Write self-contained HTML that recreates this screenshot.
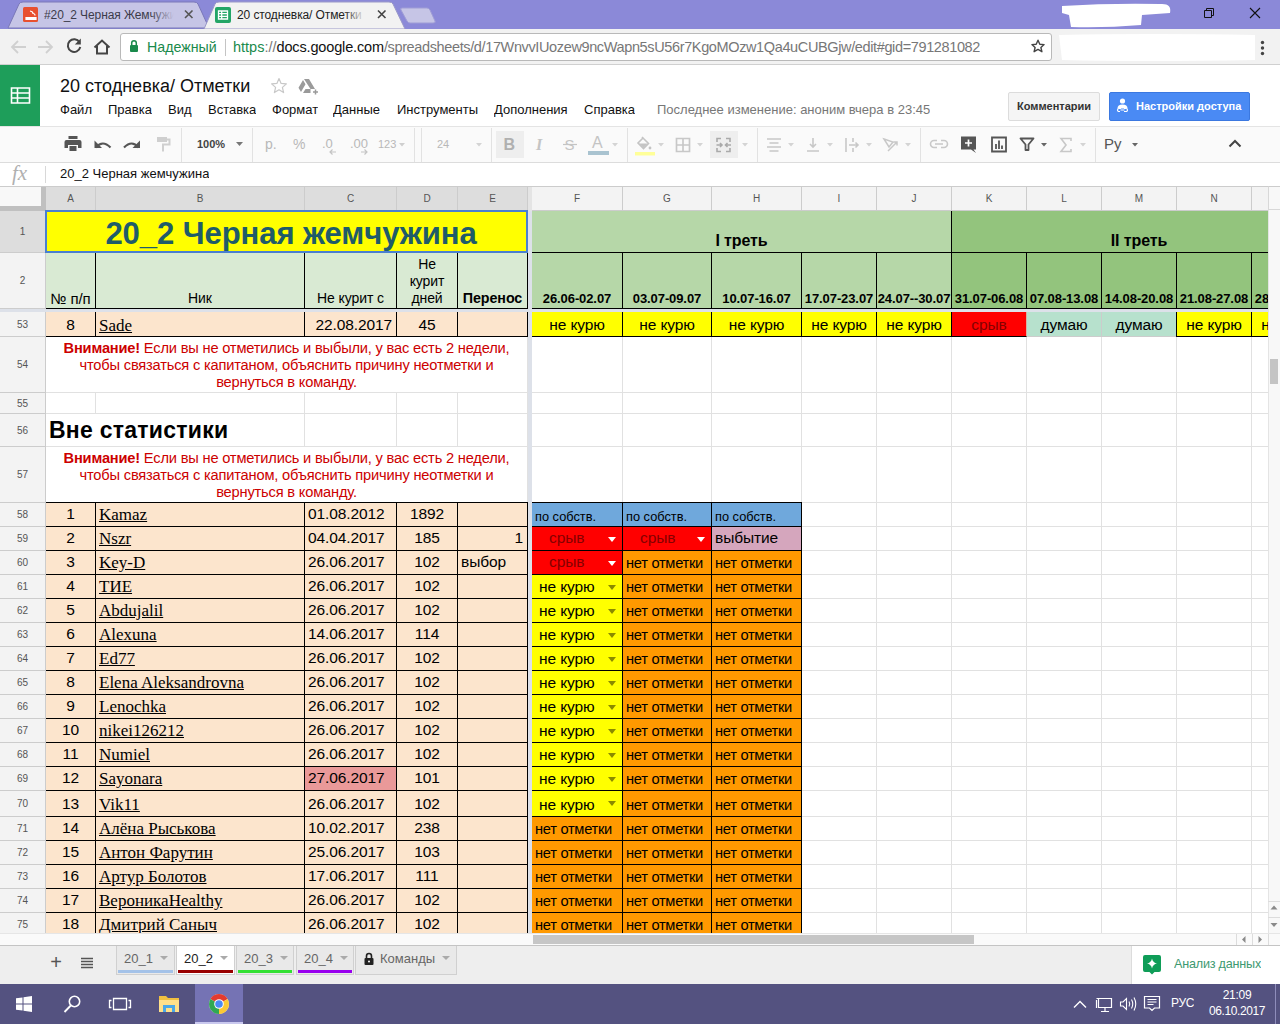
<!DOCTYPE html>
<html lang="ru"><head><meta charset="utf-8">
<title>20 стодневка/ Отметки</title>
<style>
*{box-sizing:border-box;margin:0;padding:0}
html,body{width:1280px;height:1024px;overflow:hidden;background:#fff;font-family:"Liberation Sans",sans-serif;color:#000}
.b{position:absolute;overflow:hidden;white-space:nowrap}
#grid{position:absolute;left:0;top:0;width:1268px;height:933px;overflow:hidden;background:#fff}
.c{border-right:1px solid #e1e1e1;border-bottom:1px solid #e1e1e1;font-size:15.5px;letter-spacing:-0.1px;line-height:22px}
.k{border-right:1px solid #000;border-bottom:1px solid #000}
.rh{background:#f3f3f3;border-right:1px solid #ccc;border-bottom:1px solid #ccc;color:#444;font-size:10px;text-align:center}
.ch{background:#f3f3f3;border-right:1px solid #ccc;border-bottom:1px solid #ccc;color:#444;font-size:10px;text-align:center;line-height:23px}
.ctr{text-align:center}
.nick{font-family:"Liberation Serif",serif;text-decoration:underline;font-size:17px;letter-spacing:0;padding-left:3px;line-height:24px}
.peach{background:#fce5cd}
.yel{background:#ffff00}
.org{background:#ff9900}
.red{background:#ff0000}
.warn{color:#cc0000;font-size:14.67px;letter-spacing:-0.19px;line-height:17px;white-space:normal;text-align:center}
.mn{height:18px;font-size:13px;line-height:18px;color:#111}
.tt{font-size:13px;fill:#b8b8b8;font-family:"Liberation Sans",sans-serif}
.st{top:946px;height:29px;background:#e9e9e9;border:1px solid #d0d0d0;border-top:none;font-size:13px;line-height:25px;color:#666;padding-left:7px}
.st i{position:absolute;left:43px;top:10px;width:0;height:0;border-left:4px solid transparent;border-right:4px solid transparent;border-top:4px solid #aaa}
.st u{position:absolute;left:1px;right:1px;bottom:1px;height:3px}
.rh{color:#555}.ch{color:#555}
</style></head><body>
<div id="grid">
<div class="b " style="left:0px;top:186px;width:1268px;height:25px;background:#f3f3f3"></div>
<div class="b " style="left:0px;top:186px;width:46px;height:25px;background:#f8f8f8;border-right:5px solid #c0c0c0;border-bottom:5px solid #c0c0c0"></div>
<div class="b" style="left:0px;top:186px;width:1268px;height:1px;background:#ccc"></div>
<div class="b ch" style="left:46px;top:187px;width:50px;height:24px;background:#dddddd;">A</div>
<div class="b ch" style="left:96px;top:187px;width:209px;height:24px;background:#dddddd;">B</div>
<div class="b ch" style="left:305px;top:187px;width:92px;height:24px;background:#dddddd;">C</div>
<div class="b ch" style="left:397px;top:187px;width:61px;height:24px;background:#dddddd;">D</div>
<div class="b ch" style="left:458px;top:187px;width:70px;height:24px;background:#dddddd;">E</div>
<div class="b ch" style="left:532px;top:187px;width:91px;height:24px;">F</div>
<div class="b ch" style="left:623px;top:187px;width:89px;height:24px;">G</div>
<div class="b ch" style="left:712px;top:187px;width:90px;height:24px;">H</div>
<div class="b ch" style="left:802px;top:187px;width:75px;height:24px;">I</div>
<div class="b ch" style="left:877px;top:187px;width:75px;height:24px;">J</div>
<div class="b ch" style="left:952px;top:187px;width:75px;height:24px;">K</div>
<div class="b ch" style="left:1027px;top:187px;width:75px;height:24px;">L</div>
<div class="b ch" style="left:1102px;top:187px;width:75px;height:24px;">M</div>
<div class="b ch" style="left:1177px;top:187px;width:75px;height:24px;">N</div>
<div class="b ch" style="left:1252px;top:187px;width:75px;height:24px;"></div>
<div class="b " style="left:528px;top:187px;width:4px;height:24px;background:#e4e4e4"></div>
<div class="b rh" style="left:0px;top:211px;width:46px;height:42px;background:#dddddd;line-height:42px">1</div>
<div class="b rh" style="left:0px;top:253px;width:46px;height:56px;line-height:56px">2</div>
<div class="b rh" style="left:0px;top:312px;width:46px;height:25px;line-height:25px">53</div>
<div class="b rh" style="left:0px;top:337px;width:46px;height:56px;line-height:56px">54</div>
<div class="b rh" style="left:0px;top:393px;width:46px;height:21px;line-height:21px">55</div>
<div class="b rh" style="left:0px;top:414px;width:46px;height:33px;line-height:33px">56</div>
<div class="b rh" style="left:0px;top:447px;width:46px;height:56px;line-height:56px">57</div>
<div class="b rh" style="left:0px;top:503px;width:46px;height:24px;line-height:24px">58</div>
<div class="b rh" style="left:0px;top:527px;width:46px;height:24px;line-height:24px">59</div>
<div class="b rh" style="left:0px;top:551px;width:46px;height:24px;line-height:24px">60</div>
<div class="b rh" style="left:0px;top:575px;width:46px;height:24px;line-height:24px">61</div>
<div class="b rh" style="left:0px;top:599px;width:46px;height:24px;line-height:24px">62</div>
<div class="b rh" style="left:0px;top:623px;width:46px;height:24px;line-height:24px">63</div>
<div class="b rh" style="left:0px;top:647px;width:46px;height:24px;line-height:24px">64</div>
<div class="b rh" style="left:0px;top:671px;width:46px;height:24px;line-height:24px">65</div>
<div class="b rh" style="left:0px;top:695px;width:46px;height:24px;line-height:24px">66</div>
<div class="b rh" style="left:0px;top:719px;width:46px;height:24px;line-height:24px">67</div>
<div class="b rh" style="left:0px;top:743px;width:46px;height:24px;line-height:24px">68</div>
<div class="b rh" style="left:0px;top:767px;width:46px;height:24px;line-height:24px">69</div>
<div class="b rh" style="left:0px;top:791px;width:46px;height:26px;line-height:26px">70</div>
<div class="b rh" style="left:0px;top:817px;width:46px;height:24px;line-height:24px">71</div>
<div class="b rh" style="left:0px;top:841px;width:46px;height:24px;line-height:24px">72</div>
<div class="b rh" style="left:0px;top:865px;width:46px;height:24px;line-height:24px">73</div>
<div class="b rh" style="left:0px;top:889px;width:46px;height:24px;line-height:24px">74</div>
<div class="b rh" style="left:0px;top:913px;width:46px;height:24px;line-height:24px">75</div>
<div class="b c " style="left:46px;top:211px;width:50px;height:42px;"></div>
<div class="b c " style="left:96px;top:211px;width:209px;height:42px;"></div>
<div class="b c " style="left:305px;top:211px;width:92px;height:42px;"></div>
<div class="b c " style="left:397px;top:211px;width:61px;height:42px;"></div>
<div class="b c " style="left:458px;top:211px;width:70px;height:42px;"></div>
<div class="b c " style="left:532px;top:211px;width:91px;height:42px;"></div>
<div class="b c " style="left:623px;top:211px;width:89px;height:42px;"></div>
<div class="b c " style="left:712px;top:211px;width:90px;height:42px;"></div>
<div class="b c " style="left:802px;top:211px;width:75px;height:42px;"></div>
<div class="b c " style="left:877px;top:211px;width:75px;height:42px;"></div>
<div class="b c " style="left:952px;top:211px;width:75px;height:42px;"></div>
<div class="b c " style="left:1027px;top:211px;width:75px;height:42px;"></div>
<div class="b c " style="left:1102px;top:211px;width:75px;height:42px;"></div>
<div class="b c " style="left:1177px;top:211px;width:75px;height:42px;"></div>
<div class="b c " style="left:1252px;top:211px;width:75px;height:42px;"></div>
<div class="b c " style="left:46px;top:253px;width:50px;height:56px;"></div>
<div class="b c " style="left:96px;top:253px;width:209px;height:56px;"></div>
<div class="b c " style="left:305px;top:253px;width:92px;height:56px;"></div>
<div class="b c " style="left:397px;top:253px;width:61px;height:56px;"></div>
<div class="b c " style="left:458px;top:253px;width:70px;height:56px;"></div>
<div class="b c " style="left:532px;top:253px;width:91px;height:56px;"></div>
<div class="b c " style="left:623px;top:253px;width:89px;height:56px;"></div>
<div class="b c " style="left:712px;top:253px;width:90px;height:56px;"></div>
<div class="b c " style="left:802px;top:253px;width:75px;height:56px;"></div>
<div class="b c " style="left:877px;top:253px;width:75px;height:56px;"></div>
<div class="b c " style="left:952px;top:253px;width:75px;height:56px;"></div>
<div class="b c " style="left:1027px;top:253px;width:75px;height:56px;"></div>
<div class="b c " style="left:1102px;top:253px;width:75px;height:56px;"></div>
<div class="b c " style="left:1177px;top:253px;width:75px;height:56px;"></div>
<div class="b c " style="left:1252px;top:253px;width:75px;height:56px;"></div>
<div class="b c " style="left:46px;top:312px;width:50px;height:25px;"></div>
<div class="b c " style="left:96px;top:312px;width:209px;height:25px;"></div>
<div class="b c " style="left:305px;top:312px;width:92px;height:25px;"></div>
<div class="b c " style="left:397px;top:312px;width:61px;height:25px;"></div>
<div class="b c " style="left:458px;top:312px;width:70px;height:25px;"></div>
<div class="b c " style="left:532px;top:312px;width:91px;height:25px;"></div>
<div class="b c " style="left:623px;top:312px;width:89px;height:25px;"></div>
<div class="b c " style="left:712px;top:312px;width:90px;height:25px;"></div>
<div class="b c " style="left:802px;top:312px;width:75px;height:25px;"></div>
<div class="b c " style="left:877px;top:312px;width:75px;height:25px;"></div>
<div class="b c " style="left:952px;top:312px;width:75px;height:25px;"></div>
<div class="b c " style="left:1027px;top:312px;width:75px;height:25px;"></div>
<div class="b c " style="left:1102px;top:312px;width:75px;height:25px;"></div>
<div class="b c " style="left:1177px;top:312px;width:75px;height:25px;"></div>
<div class="b c " style="left:1252px;top:312px;width:75px;height:25px;"></div>
<div class="b c " style="left:46px;top:337px;width:50px;height:56px;"></div>
<div class="b c " style="left:96px;top:337px;width:209px;height:56px;"></div>
<div class="b c " style="left:305px;top:337px;width:92px;height:56px;"></div>
<div class="b c " style="left:397px;top:337px;width:61px;height:56px;"></div>
<div class="b c " style="left:458px;top:337px;width:70px;height:56px;"></div>
<div class="b c " style="left:532px;top:337px;width:91px;height:56px;"></div>
<div class="b c " style="left:623px;top:337px;width:89px;height:56px;"></div>
<div class="b c " style="left:712px;top:337px;width:90px;height:56px;"></div>
<div class="b c " style="left:802px;top:337px;width:75px;height:56px;"></div>
<div class="b c " style="left:877px;top:337px;width:75px;height:56px;"></div>
<div class="b c " style="left:952px;top:337px;width:75px;height:56px;"></div>
<div class="b c " style="left:1027px;top:337px;width:75px;height:56px;"></div>
<div class="b c " style="left:1102px;top:337px;width:75px;height:56px;"></div>
<div class="b c " style="left:1177px;top:337px;width:75px;height:56px;"></div>
<div class="b c " style="left:1252px;top:337px;width:75px;height:56px;"></div>
<div class="b c " style="left:46px;top:393px;width:50px;height:21px;"></div>
<div class="b c " style="left:96px;top:393px;width:209px;height:21px;"></div>
<div class="b c " style="left:305px;top:393px;width:92px;height:21px;"></div>
<div class="b c " style="left:397px;top:393px;width:61px;height:21px;"></div>
<div class="b c " style="left:458px;top:393px;width:70px;height:21px;"></div>
<div class="b c " style="left:532px;top:393px;width:91px;height:21px;"></div>
<div class="b c " style="left:623px;top:393px;width:89px;height:21px;"></div>
<div class="b c " style="left:712px;top:393px;width:90px;height:21px;"></div>
<div class="b c " style="left:802px;top:393px;width:75px;height:21px;"></div>
<div class="b c " style="left:877px;top:393px;width:75px;height:21px;"></div>
<div class="b c " style="left:952px;top:393px;width:75px;height:21px;"></div>
<div class="b c " style="left:1027px;top:393px;width:75px;height:21px;"></div>
<div class="b c " style="left:1102px;top:393px;width:75px;height:21px;"></div>
<div class="b c " style="left:1177px;top:393px;width:75px;height:21px;"></div>
<div class="b c " style="left:1252px;top:393px;width:75px;height:21px;"></div>
<div class="b c " style="left:46px;top:414px;width:50px;height:33px;"></div>
<div class="b c " style="left:96px;top:414px;width:209px;height:33px;"></div>
<div class="b c " style="left:305px;top:414px;width:92px;height:33px;"></div>
<div class="b c " style="left:397px;top:414px;width:61px;height:33px;"></div>
<div class="b c " style="left:458px;top:414px;width:70px;height:33px;"></div>
<div class="b c " style="left:532px;top:414px;width:91px;height:33px;"></div>
<div class="b c " style="left:623px;top:414px;width:89px;height:33px;"></div>
<div class="b c " style="left:712px;top:414px;width:90px;height:33px;"></div>
<div class="b c " style="left:802px;top:414px;width:75px;height:33px;"></div>
<div class="b c " style="left:877px;top:414px;width:75px;height:33px;"></div>
<div class="b c " style="left:952px;top:414px;width:75px;height:33px;"></div>
<div class="b c " style="left:1027px;top:414px;width:75px;height:33px;"></div>
<div class="b c " style="left:1102px;top:414px;width:75px;height:33px;"></div>
<div class="b c " style="left:1177px;top:414px;width:75px;height:33px;"></div>
<div class="b c " style="left:1252px;top:414px;width:75px;height:33px;"></div>
<div class="b c " style="left:46px;top:447px;width:50px;height:56px;"></div>
<div class="b c " style="left:96px;top:447px;width:209px;height:56px;"></div>
<div class="b c " style="left:305px;top:447px;width:92px;height:56px;"></div>
<div class="b c " style="left:397px;top:447px;width:61px;height:56px;"></div>
<div class="b c " style="left:458px;top:447px;width:70px;height:56px;"></div>
<div class="b c " style="left:532px;top:447px;width:91px;height:56px;"></div>
<div class="b c " style="left:623px;top:447px;width:89px;height:56px;"></div>
<div class="b c " style="left:712px;top:447px;width:90px;height:56px;"></div>
<div class="b c " style="left:802px;top:447px;width:75px;height:56px;"></div>
<div class="b c " style="left:877px;top:447px;width:75px;height:56px;"></div>
<div class="b c " style="left:952px;top:447px;width:75px;height:56px;"></div>
<div class="b c " style="left:1027px;top:447px;width:75px;height:56px;"></div>
<div class="b c " style="left:1102px;top:447px;width:75px;height:56px;"></div>
<div class="b c " style="left:1177px;top:447px;width:75px;height:56px;"></div>
<div class="b c " style="left:1252px;top:447px;width:75px;height:56px;"></div>
<div class="b c " style="left:46px;top:503px;width:50px;height:24px;"></div>
<div class="b c " style="left:96px;top:503px;width:209px;height:24px;"></div>
<div class="b c " style="left:305px;top:503px;width:92px;height:24px;"></div>
<div class="b c " style="left:397px;top:503px;width:61px;height:24px;"></div>
<div class="b c " style="left:458px;top:503px;width:70px;height:24px;"></div>
<div class="b c " style="left:532px;top:503px;width:91px;height:24px;"></div>
<div class="b c " style="left:623px;top:503px;width:89px;height:24px;"></div>
<div class="b c " style="left:712px;top:503px;width:90px;height:24px;"></div>
<div class="b c " style="left:802px;top:503px;width:75px;height:24px;"></div>
<div class="b c " style="left:877px;top:503px;width:75px;height:24px;"></div>
<div class="b c " style="left:952px;top:503px;width:75px;height:24px;"></div>
<div class="b c " style="left:1027px;top:503px;width:75px;height:24px;"></div>
<div class="b c " style="left:1102px;top:503px;width:75px;height:24px;"></div>
<div class="b c " style="left:1177px;top:503px;width:75px;height:24px;"></div>
<div class="b c " style="left:1252px;top:503px;width:75px;height:24px;"></div>
<div class="b c " style="left:46px;top:527px;width:50px;height:24px;"></div>
<div class="b c " style="left:96px;top:527px;width:209px;height:24px;"></div>
<div class="b c " style="left:305px;top:527px;width:92px;height:24px;"></div>
<div class="b c " style="left:397px;top:527px;width:61px;height:24px;"></div>
<div class="b c " style="left:458px;top:527px;width:70px;height:24px;"></div>
<div class="b c " style="left:532px;top:527px;width:91px;height:24px;"></div>
<div class="b c " style="left:623px;top:527px;width:89px;height:24px;"></div>
<div class="b c " style="left:712px;top:527px;width:90px;height:24px;"></div>
<div class="b c " style="left:802px;top:527px;width:75px;height:24px;"></div>
<div class="b c " style="left:877px;top:527px;width:75px;height:24px;"></div>
<div class="b c " style="left:952px;top:527px;width:75px;height:24px;"></div>
<div class="b c " style="left:1027px;top:527px;width:75px;height:24px;"></div>
<div class="b c " style="left:1102px;top:527px;width:75px;height:24px;"></div>
<div class="b c " style="left:1177px;top:527px;width:75px;height:24px;"></div>
<div class="b c " style="left:1252px;top:527px;width:75px;height:24px;"></div>
<div class="b c " style="left:46px;top:551px;width:50px;height:24px;"></div>
<div class="b c " style="left:96px;top:551px;width:209px;height:24px;"></div>
<div class="b c " style="left:305px;top:551px;width:92px;height:24px;"></div>
<div class="b c " style="left:397px;top:551px;width:61px;height:24px;"></div>
<div class="b c " style="left:458px;top:551px;width:70px;height:24px;"></div>
<div class="b c " style="left:532px;top:551px;width:91px;height:24px;"></div>
<div class="b c " style="left:623px;top:551px;width:89px;height:24px;"></div>
<div class="b c " style="left:712px;top:551px;width:90px;height:24px;"></div>
<div class="b c " style="left:802px;top:551px;width:75px;height:24px;"></div>
<div class="b c " style="left:877px;top:551px;width:75px;height:24px;"></div>
<div class="b c " style="left:952px;top:551px;width:75px;height:24px;"></div>
<div class="b c " style="left:1027px;top:551px;width:75px;height:24px;"></div>
<div class="b c " style="left:1102px;top:551px;width:75px;height:24px;"></div>
<div class="b c " style="left:1177px;top:551px;width:75px;height:24px;"></div>
<div class="b c " style="left:1252px;top:551px;width:75px;height:24px;"></div>
<div class="b c " style="left:46px;top:575px;width:50px;height:24px;"></div>
<div class="b c " style="left:96px;top:575px;width:209px;height:24px;"></div>
<div class="b c " style="left:305px;top:575px;width:92px;height:24px;"></div>
<div class="b c " style="left:397px;top:575px;width:61px;height:24px;"></div>
<div class="b c " style="left:458px;top:575px;width:70px;height:24px;"></div>
<div class="b c " style="left:532px;top:575px;width:91px;height:24px;"></div>
<div class="b c " style="left:623px;top:575px;width:89px;height:24px;"></div>
<div class="b c " style="left:712px;top:575px;width:90px;height:24px;"></div>
<div class="b c " style="left:802px;top:575px;width:75px;height:24px;"></div>
<div class="b c " style="left:877px;top:575px;width:75px;height:24px;"></div>
<div class="b c " style="left:952px;top:575px;width:75px;height:24px;"></div>
<div class="b c " style="left:1027px;top:575px;width:75px;height:24px;"></div>
<div class="b c " style="left:1102px;top:575px;width:75px;height:24px;"></div>
<div class="b c " style="left:1177px;top:575px;width:75px;height:24px;"></div>
<div class="b c " style="left:1252px;top:575px;width:75px;height:24px;"></div>
<div class="b c " style="left:46px;top:599px;width:50px;height:24px;"></div>
<div class="b c " style="left:96px;top:599px;width:209px;height:24px;"></div>
<div class="b c " style="left:305px;top:599px;width:92px;height:24px;"></div>
<div class="b c " style="left:397px;top:599px;width:61px;height:24px;"></div>
<div class="b c " style="left:458px;top:599px;width:70px;height:24px;"></div>
<div class="b c " style="left:532px;top:599px;width:91px;height:24px;"></div>
<div class="b c " style="left:623px;top:599px;width:89px;height:24px;"></div>
<div class="b c " style="left:712px;top:599px;width:90px;height:24px;"></div>
<div class="b c " style="left:802px;top:599px;width:75px;height:24px;"></div>
<div class="b c " style="left:877px;top:599px;width:75px;height:24px;"></div>
<div class="b c " style="left:952px;top:599px;width:75px;height:24px;"></div>
<div class="b c " style="left:1027px;top:599px;width:75px;height:24px;"></div>
<div class="b c " style="left:1102px;top:599px;width:75px;height:24px;"></div>
<div class="b c " style="left:1177px;top:599px;width:75px;height:24px;"></div>
<div class="b c " style="left:1252px;top:599px;width:75px;height:24px;"></div>
<div class="b c " style="left:46px;top:623px;width:50px;height:24px;"></div>
<div class="b c " style="left:96px;top:623px;width:209px;height:24px;"></div>
<div class="b c " style="left:305px;top:623px;width:92px;height:24px;"></div>
<div class="b c " style="left:397px;top:623px;width:61px;height:24px;"></div>
<div class="b c " style="left:458px;top:623px;width:70px;height:24px;"></div>
<div class="b c " style="left:532px;top:623px;width:91px;height:24px;"></div>
<div class="b c " style="left:623px;top:623px;width:89px;height:24px;"></div>
<div class="b c " style="left:712px;top:623px;width:90px;height:24px;"></div>
<div class="b c " style="left:802px;top:623px;width:75px;height:24px;"></div>
<div class="b c " style="left:877px;top:623px;width:75px;height:24px;"></div>
<div class="b c " style="left:952px;top:623px;width:75px;height:24px;"></div>
<div class="b c " style="left:1027px;top:623px;width:75px;height:24px;"></div>
<div class="b c " style="left:1102px;top:623px;width:75px;height:24px;"></div>
<div class="b c " style="left:1177px;top:623px;width:75px;height:24px;"></div>
<div class="b c " style="left:1252px;top:623px;width:75px;height:24px;"></div>
<div class="b c " style="left:46px;top:647px;width:50px;height:24px;"></div>
<div class="b c " style="left:96px;top:647px;width:209px;height:24px;"></div>
<div class="b c " style="left:305px;top:647px;width:92px;height:24px;"></div>
<div class="b c " style="left:397px;top:647px;width:61px;height:24px;"></div>
<div class="b c " style="left:458px;top:647px;width:70px;height:24px;"></div>
<div class="b c " style="left:532px;top:647px;width:91px;height:24px;"></div>
<div class="b c " style="left:623px;top:647px;width:89px;height:24px;"></div>
<div class="b c " style="left:712px;top:647px;width:90px;height:24px;"></div>
<div class="b c " style="left:802px;top:647px;width:75px;height:24px;"></div>
<div class="b c " style="left:877px;top:647px;width:75px;height:24px;"></div>
<div class="b c " style="left:952px;top:647px;width:75px;height:24px;"></div>
<div class="b c " style="left:1027px;top:647px;width:75px;height:24px;"></div>
<div class="b c " style="left:1102px;top:647px;width:75px;height:24px;"></div>
<div class="b c " style="left:1177px;top:647px;width:75px;height:24px;"></div>
<div class="b c " style="left:1252px;top:647px;width:75px;height:24px;"></div>
<div class="b c " style="left:46px;top:671px;width:50px;height:24px;"></div>
<div class="b c " style="left:96px;top:671px;width:209px;height:24px;"></div>
<div class="b c " style="left:305px;top:671px;width:92px;height:24px;"></div>
<div class="b c " style="left:397px;top:671px;width:61px;height:24px;"></div>
<div class="b c " style="left:458px;top:671px;width:70px;height:24px;"></div>
<div class="b c " style="left:532px;top:671px;width:91px;height:24px;"></div>
<div class="b c " style="left:623px;top:671px;width:89px;height:24px;"></div>
<div class="b c " style="left:712px;top:671px;width:90px;height:24px;"></div>
<div class="b c " style="left:802px;top:671px;width:75px;height:24px;"></div>
<div class="b c " style="left:877px;top:671px;width:75px;height:24px;"></div>
<div class="b c " style="left:952px;top:671px;width:75px;height:24px;"></div>
<div class="b c " style="left:1027px;top:671px;width:75px;height:24px;"></div>
<div class="b c " style="left:1102px;top:671px;width:75px;height:24px;"></div>
<div class="b c " style="left:1177px;top:671px;width:75px;height:24px;"></div>
<div class="b c " style="left:1252px;top:671px;width:75px;height:24px;"></div>
<div class="b c " style="left:46px;top:695px;width:50px;height:24px;"></div>
<div class="b c " style="left:96px;top:695px;width:209px;height:24px;"></div>
<div class="b c " style="left:305px;top:695px;width:92px;height:24px;"></div>
<div class="b c " style="left:397px;top:695px;width:61px;height:24px;"></div>
<div class="b c " style="left:458px;top:695px;width:70px;height:24px;"></div>
<div class="b c " style="left:532px;top:695px;width:91px;height:24px;"></div>
<div class="b c " style="left:623px;top:695px;width:89px;height:24px;"></div>
<div class="b c " style="left:712px;top:695px;width:90px;height:24px;"></div>
<div class="b c " style="left:802px;top:695px;width:75px;height:24px;"></div>
<div class="b c " style="left:877px;top:695px;width:75px;height:24px;"></div>
<div class="b c " style="left:952px;top:695px;width:75px;height:24px;"></div>
<div class="b c " style="left:1027px;top:695px;width:75px;height:24px;"></div>
<div class="b c " style="left:1102px;top:695px;width:75px;height:24px;"></div>
<div class="b c " style="left:1177px;top:695px;width:75px;height:24px;"></div>
<div class="b c " style="left:1252px;top:695px;width:75px;height:24px;"></div>
<div class="b c " style="left:46px;top:719px;width:50px;height:24px;"></div>
<div class="b c " style="left:96px;top:719px;width:209px;height:24px;"></div>
<div class="b c " style="left:305px;top:719px;width:92px;height:24px;"></div>
<div class="b c " style="left:397px;top:719px;width:61px;height:24px;"></div>
<div class="b c " style="left:458px;top:719px;width:70px;height:24px;"></div>
<div class="b c " style="left:532px;top:719px;width:91px;height:24px;"></div>
<div class="b c " style="left:623px;top:719px;width:89px;height:24px;"></div>
<div class="b c " style="left:712px;top:719px;width:90px;height:24px;"></div>
<div class="b c " style="left:802px;top:719px;width:75px;height:24px;"></div>
<div class="b c " style="left:877px;top:719px;width:75px;height:24px;"></div>
<div class="b c " style="left:952px;top:719px;width:75px;height:24px;"></div>
<div class="b c " style="left:1027px;top:719px;width:75px;height:24px;"></div>
<div class="b c " style="left:1102px;top:719px;width:75px;height:24px;"></div>
<div class="b c " style="left:1177px;top:719px;width:75px;height:24px;"></div>
<div class="b c " style="left:1252px;top:719px;width:75px;height:24px;"></div>
<div class="b c " style="left:46px;top:743px;width:50px;height:24px;"></div>
<div class="b c " style="left:96px;top:743px;width:209px;height:24px;"></div>
<div class="b c " style="left:305px;top:743px;width:92px;height:24px;"></div>
<div class="b c " style="left:397px;top:743px;width:61px;height:24px;"></div>
<div class="b c " style="left:458px;top:743px;width:70px;height:24px;"></div>
<div class="b c " style="left:532px;top:743px;width:91px;height:24px;"></div>
<div class="b c " style="left:623px;top:743px;width:89px;height:24px;"></div>
<div class="b c " style="left:712px;top:743px;width:90px;height:24px;"></div>
<div class="b c " style="left:802px;top:743px;width:75px;height:24px;"></div>
<div class="b c " style="left:877px;top:743px;width:75px;height:24px;"></div>
<div class="b c " style="left:952px;top:743px;width:75px;height:24px;"></div>
<div class="b c " style="left:1027px;top:743px;width:75px;height:24px;"></div>
<div class="b c " style="left:1102px;top:743px;width:75px;height:24px;"></div>
<div class="b c " style="left:1177px;top:743px;width:75px;height:24px;"></div>
<div class="b c " style="left:1252px;top:743px;width:75px;height:24px;"></div>
<div class="b c " style="left:46px;top:767px;width:50px;height:24px;"></div>
<div class="b c " style="left:96px;top:767px;width:209px;height:24px;"></div>
<div class="b c " style="left:305px;top:767px;width:92px;height:24px;"></div>
<div class="b c " style="left:397px;top:767px;width:61px;height:24px;"></div>
<div class="b c " style="left:458px;top:767px;width:70px;height:24px;"></div>
<div class="b c " style="left:532px;top:767px;width:91px;height:24px;"></div>
<div class="b c " style="left:623px;top:767px;width:89px;height:24px;"></div>
<div class="b c " style="left:712px;top:767px;width:90px;height:24px;"></div>
<div class="b c " style="left:802px;top:767px;width:75px;height:24px;"></div>
<div class="b c " style="left:877px;top:767px;width:75px;height:24px;"></div>
<div class="b c " style="left:952px;top:767px;width:75px;height:24px;"></div>
<div class="b c " style="left:1027px;top:767px;width:75px;height:24px;"></div>
<div class="b c " style="left:1102px;top:767px;width:75px;height:24px;"></div>
<div class="b c " style="left:1177px;top:767px;width:75px;height:24px;"></div>
<div class="b c " style="left:1252px;top:767px;width:75px;height:24px;"></div>
<div class="b c " style="left:46px;top:791px;width:50px;height:26px;"></div>
<div class="b c " style="left:96px;top:791px;width:209px;height:26px;"></div>
<div class="b c " style="left:305px;top:791px;width:92px;height:26px;"></div>
<div class="b c " style="left:397px;top:791px;width:61px;height:26px;"></div>
<div class="b c " style="left:458px;top:791px;width:70px;height:26px;"></div>
<div class="b c " style="left:532px;top:791px;width:91px;height:26px;"></div>
<div class="b c " style="left:623px;top:791px;width:89px;height:26px;"></div>
<div class="b c " style="left:712px;top:791px;width:90px;height:26px;"></div>
<div class="b c " style="left:802px;top:791px;width:75px;height:26px;"></div>
<div class="b c " style="left:877px;top:791px;width:75px;height:26px;"></div>
<div class="b c " style="left:952px;top:791px;width:75px;height:26px;"></div>
<div class="b c " style="left:1027px;top:791px;width:75px;height:26px;"></div>
<div class="b c " style="left:1102px;top:791px;width:75px;height:26px;"></div>
<div class="b c " style="left:1177px;top:791px;width:75px;height:26px;"></div>
<div class="b c " style="left:1252px;top:791px;width:75px;height:26px;"></div>
<div class="b c " style="left:46px;top:817px;width:50px;height:24px;"></div>
<div class="b c " style="left:96px;top:817px;width:209px;height:24px;"></div>
<div class="b c " style="left:305px;top:817px;width:92px;height:24px;"></div>
<div class="b c " style="left:397px;top:817px;width:61px;height:24px;"></div>
<div class="b c " style="left:458px;top:817px;width:70px;height:24px;"></div>
<div class="b c " style="left:532px;top:817px;width:91px;height:24px;"></div>
<div class="b c " style="left:623px;top:817px;width:89px;height:24px;"></div>
<div class="b c " style="left:712px;top:817px;width:90px;height:24px;"></div>
<div class="b c " style="left:802px;top:817px;width:75px;height:24px;"></div>
<div class="b c " style="left:877px;top:817px;width:75px;height:24px;"></div>
<div class="b c " style="left:952px;top:817px;width:75px;height:24px;"></div>
<div class="b c " style="left:1027px;top:817px;width:75px;height:24px;"></div>
<div class="b c " style="left:1102px;top:817px;width:75px;height:24px;"></div>
<div class="b c " style="left:1177px;top:817px;width:75px;height:24px;"></div>
<div class="b c " style="left:1252px;top:817px;width:75px;height:24px;"></div>
<div class="b c " style="left:46px;top:841px;width:50px;height:24px;"></div>
<div class="b c " style="left:96px;top:841px;width:209px;height:24px;"></div>
<div class="b c " style="left:305px;top:841px;width:92px;height:24px;"></div>
<div class="b c " style="left:397px;top:841px;width:61px;height:24px;"></div>
<div class="b c " style="left:458px;top:841px;width:70px;height:24px;"></div>
<div class="b c " style="left:532px;top:841px;width:91px;height:24px;"></div>
<div class="b c " style="left:623px;top:841px;width:89px;height:24px;"></div>
<div class="b c " style="left:712px;top:841px;width:90px;height:24px;"></div>
<div class="b c " style="left:802px;top:841px;width:75px;height:24px;"></div>
<div class="b c " style="left:877px;top:841px;width:75px;height:24px;"></div>
<div class="b c " style="left:952px;top:841px;width:75px;height:24px;"></div>
<div class="b c " style="left:1027px;top:841px;width:75px;height:24px;"></div>
<div class="b c " style="left:1102px;top:841px;width:75px;height:24px;"></div>
<div class="b c " style="left:1177px;top:841px;width:75px;height:24px;"></div>
<div class="b c " style="left:1252px;top:841px;width:75px;height:24px;"></div>
<div class="b c " style="left:46px;top:865px;width:50px;height:24px;"></div>
<div class="b c " style="left:96px;top:865px;width:209px;height:24px;"></div>
<div class="b c " style="left:305px;top:865px;width:92px;height:24px;"></div>
<div class="b c " style="left:397px;top:865px;width:61px;height:24px;"></div>
<div class="b c " style="left:458px;top:865px;width:70px;height:24px;"></div>
<div class="b c " style="left:532px;top:865px;width:91px;height:24px;"></div>
<div class="b c " style="left:623px;top:865px;width:89px;height:24px;"></div>
<div class="b c " style="left:712px;top:865px;width:90px;height:24px;"></div>
<div class="b c " style="left:802px;top:865px;width:75px;height:24px;"></div>
<div class="b c " style="left:877px;top:865px;width:75px;height:24px;"></div>
<div class="b c " style="left:952px;top:865px;width:75px;height:24px;"></div>
<div class="b c " style="left:1027px;top:865px;width:75px;height:24px;"></div>
<div class="b c " style="left:1102px;top:865px;width:75px;height:24px;"></div>
<div class="b c " style="left:1177px;top:865px;width:75px;height:24px;"></div>
<div class="b c " style="left:1252px;top:865px;width:75px;height:24px;"></div>
<div class="b c " style="left:46px;top:889px;width:50px;height:24px;"></div>
<div class="b c " style="left:96px;top:889px;width:209px;height:24px;"></div>
<div class="b c " style="left:305px;top:889px;width:92px;height:24px;"></div>
<div class="b c " style="left:397px;top:889px;width:61px;height:24px;"></div>
<div class="b c " style="left:458px;top:889px;width:70px;height:24px;"></div>
<div class="b c " style="left:532px;top:889px;width:91px;height:24px;"></div>
<div class="b c " style="left:623px;top:889px;width:89px;height:24px;"></div>
<div class="b c " style="left:712px;top:889px;width:90px;height:24px;"></div>
<div class="b c " style="left:802px;top:889px;width:75px;height:24px;"></div>
<div class="b c " style="left:877px;top:889px;width:75px;height:24px;"></div>
<div class="b c " style="left:952px;top:889px;width:75px;height:24px;"></div>
<div class="b c " style="left:1027px;top:889px;width:75px;height:24px;"></div>
<div class="b c " style="left:1102px;top:889px;width:75px;height:24px;"></div>
<div class="b c " style="left:1177px;top:889px;width:75px;height:24px;"></div>
<div class="b c " style="left:1252px;top:889px;width:75px;height:24px;"></div>
<div class="b c " style="left:46px;top:913px;width:50px;height:24px;"></div>
<div class="b c " style="left:96px;top:913px;width:209px;height:24px;"></div>
<div class="b c " style="left:305px;top:913px;width:92px;height:24px;"></div>
<div class="b c " style="left:397px;top:913px;width:61px;height:24px;"></div>
<div class="b c " style="left:458px;top:913px;width:70px;height:24px;"></div>
<div class="b c " style="left:532px;top:913px;width:91px;height:24px;"></div>
<div class="b c " style="left:623px;top:913px;width:89px;height:24px;"></div>
<div class="b c " style="left:712px;top:913px;width:90px;height:24px;"></div>
<div class="b c " style="left:802px;top:913px;width:75px;height:24px;"></div>
<div class="b c " style="left:877px;top:913px;width:75px;height:24px;"></div>
<div class="b c " style="left:952px;top:913px;width:75px;height:24px;"></div>
<div class="b c " style="left:1027px;top:913px;width:75px;height:24px;"></div>
<div class="b c " style="left:1102px;top:913px;width:75px;height:24px;"></div>
<div class="b c " style="left:1177px;top:913px;width:75px;height:24px;"></div>
<div class="b c " style="left:1252px;top:913px;width:75px;height:24px;"></div>
<div class="b " style="left:528px;top:211px;width:4px;height:722px;background:#dde1e9"></div>
<div class="b " style="left:0px;top:309px;width:1268px;height:3px;background:#dde1e9"></div>
<div class="b c " style="left:46px;top:211px;width:482px;height:42px;background:#ffff00;color:#1f5c69;font-weight:bold;font-size:31.1px;line-height:43px;padding-top:1px;text-align:center;padding-left:9px">20_2 Черная жемчужина</div>
<div class="b " style="left:45px;top:210px;width:483px;height:43px;border:2px solid #4a80d0"></div>
<div class="b c k" style="left:532px;top:211px;width:420px;height:42px;background:#b6d7a8;font-weight:bold;font-size:16px;text-align:center;line-height:20px;padding-top:20px">I треть</div>
<div class="b c k" style="left:952px;top:211px;width:375px;height:42px;background:#93c47d;font-weight:bold;font-size:16px;text-align:center;line-height:20px;padding-top:20px">II треть</div>
<div class="b c k" style="left:46px;top:253px;width:50px;height:56px;background:#d9ead3;white-space:normal;text-align:center;font-size:15px"><div style="position:absolute;left:0;right:0;bottom:1px;line-height:17px">№ п/п</div></div>
<div class="b c k" style="left:96px;top:253px;width:209px;height:56px;background:#d9ead3;white-space:normal;text-align:center;font-size:14px"><div style="position:absolute;left:0;right:0;bottom:1px;line-height:17px">Ник</div></div>
<div class="b c k" style="left:305px;top:253px;width:92px;height:56px;background:#d9ead3;white-space:normal;text-align:center;font-size:14px"><div style="position:absolute;left:0;right:0;bottom:1px;line-height:17px">Не курит с</div></div>
<div class="b c k" style="left:397px;top:253px;width:61px;height:56px;background:#d9ead3;white-space:normal;text-align:center;font-size:14px"><div style="position:absolute;left:0;right:0;bottom:1px;line-height:17px">Не<br>курит<br>дней</div></div>
<div class="b c k" style="left:458px;top:253px;width:70px;height:56px;background:#d9ead3;white-space:normal;text-align:center;font-size:14.3px;font-weight:bold"><div style="position:absolute;left:0;right:0;bottom:1px;line-height:17px">Перенос</div></div>
<div class="b c k" style="left:532px;top:253px;width:91px;height:56px;background:#b6d7a8;white-space:normal;text-align:center;font-size:13px;font-weight:bold;white-space:nowrap"><div style="position:absolute;left:0;right:0;bottom:1px;line-height:17px">26.06-02.07</div></div>
<div class="b c k" style="left:623px;top:253px;width:89px;height:56px;background:#b6d7a8;white-space:normal;text-align:center;font-size:13px;font-weight:bold;white-space:nowrap"><div style="position:absolute;left:0;right:0;bottom:1px;line-height:17px">03.07-09.07</div></div>
<div class="b c k" style="left:712px;top:253px;width:90px;height:56px;background:#b6d7a8;white-space:normal;text-align:center;font-size:13px;font-weight:bold;white-space:nowrap"><div style="position:absolute;left:0;right:0;bottom:1px;line-height:17px">10.07-16.07</div></div>
<div class="b c k" style="left:802px;top:253px;width:75px;height:56px;background:#b6d7a8;white-space:normal;text-align:center;font-size:13px;font-weight:bold;white-space:nowrap"><div style="position:absolute;left:0;right:0;bottom:1px;line-height:17px">17.07-23.07</div></div>
<div class="b c k" style="left:877px;top:253px;width:75px;height:56px;background:#b6d7a8;white-space:normal;text-align:center;font-size:13px;font-weight:bold;white-space:nowrap"><div style="position:absolute;left:0;right:0;bottom:1px;line-height:17px">24.07--30.07</div></div>
<div class="b c k" style="left:952px;top:253px;width:75px;height:56px;background:#93c47d;white-space:normal;text-align:center;font-size:13px;font-weight:bold;white-space:nowrap"><div style="position:absolute;left:0;right:0;bottom:1px;line-height:17px">31.07-06.08</div></div>
<div class="b c k" style="left:1027px;top:253px;width:75px;height:56px;background:#93c47d;white-space:normal;text-align:center;font-size:13px;font-weight:bold;white-space:nowrap"><div style="position:absolute;left:0;right:0;bottom:1px;line-height:17px">07.08-13.08</div></div>
<div class="b c k" style="left:1102px;top:253px;width:75px;height:56px;background:#93c47d;white-space:normal;text-align:center;font-size:13px;font-weight:bold;white-space:nowrap"><div style="position:absolute;left:0;right:0;bottom:1px;line-height:17px">14.08-20.08</div></div>
<div class="b c k" style="left:1177px;top:253px;width:75px;height:56px;background:#93c47d;white-space:normal;text-align:center;font-size:13px;font-weight:bold;white-space:nowrap"><div style="position:absolute;left:0;right:0;bottom:1px;line-height:17px">21.08-27.08</div></div>
<div class="b c k" style="left:1252px;top:253px;width:75px;height:56px;background:#93c47d;white-space:normal;text-align:center;font-size:13px;font-weight:bold;white-space:nowrap"><div style="position:absolute;left:0;right:0;bottom:1px;line-height:17px">28.08-03.09</div></div>
<div class="b c k peach ctr" style="left:46px;top:312px;width:50px;height:25px;padding-top:2px;">8</div>
<div class="b c k peach nick" style="left:96px;top:312px;width:209px;height:25px;padding-top:2px;">Sade</div>
<div class="b c k peach" style="left:305px;top:312px;width:92px;height:25px;padding-top:2px;text-align:right;padding-right:4px;">22.08.2017</div>
<div class="b c k peach ctr" style="left:397px;top:312px;width:61px;height:25px;padding-top:2px;">45</div>
<div class="b c k peach" style="left:458px;top:312px;width:70px;height:25px;padding-top:2px;padding-left:3px"></div>
<div class="b c k yel ctr" style="left:532px;top:312px;width:91px;height:25px;padding-top:2px">не курю</div>
<div class="b c k yel ctr" style="left:623px;top:312px;width:89px;height:25px;padding-top:2px">не курю</div>
<div class="b c k yel ctr" style="left:712px;top:312px;width:90px;height:25px;padding-top:2px">не курю</div>
<div class="b c k yel ctr" style="left:802px;top:312px;width:75px;height:25px;padding-top:2px">не курю</div>
<div class="b c k yel ctr" style="left:877px;top:312px;width:75px;height:25px;padding-top:2px">не курю</div>
<div class="b c k red ctr" style="left:952px;top:312px;width:75px;height:25px;color:#850000;padding-top:2px;border-right-color:#d9b0a0">срыв</div>
<div class="b c ctr" style="left:1027px;top:312px;width:75px;height:25px;background:#b7e1cd;border-color:#ccc;padding-top:2px">думаю</div>
<div class="b c ctr" style="left:1102px;top:312px;width:75px;height:25px;background:#b7e1cd;border-color:#ccc;padding-top:2px">думаю</div>
<div class="b c k yel ctr" style="left:1177px;top:312px;width:75px;height:25px;padding-top:2px">не курю</div>
<div class="b c k yel ctr" style="left:1252px;top:312px;width:75px;height:25px;padding-top:2px">не курю</div>
<div class="b" style="left:1176px;top:312px;width:1px;height:25px;background:#000"></div>
<div class="b c warn" style="left:46px;top:337px;width:482px;height:56px;background:#fff;padding:3px 14px 0 14px"><b>Внимание!</b> Если вы не отметились и выбыли, у вас есть 2 недели, чтобы связаться с капитаном, объяснить причину неотметки и вернуться в команду.</div>
<div class="b c warn" style="left:46px;top:447px;width:482px;height:56px;background:#fff;padding:3px 14px 0 14px"><b>Внимание!</b> Если вы не отметились и выбыли, у вас есть 2 недели, чтобы связаться с капитаном, объяснить причину неотметки и вернуться в команду.</div>
<div class="b c " style="left:46px;top:414px;width:259px;height:33px;background:#fff;font-weight:bold;font-size:23px;line-height:32px;padding-left:3px;letter-spacing:0.25px">Вне статистики</div>
<div class="b c k peach ctr" style="left:46px;top:503px;width:50px;height:24px;">1</div>
<div class="b c k peach nick" style="left:96px;top:503px;width:209px;height:24px;">Kamaz</div>
<div class="b c k peach" style="left:305px;top:503px;width:92px;height:24px;text-align:left;padding-left:3px;">01.08.2012</div>
<div class="b c k peach ctr" style="left:397px;top:503px;width:61px;height:24px;">1892</div>
<div class="b c k peach" style="left:458px;top:503px;width:70px;height:24px;padding-left:3px"></div>
<div class="b c k peach ctr" style="left:46px;top:527px;width:50px;height:24px;">2</div>
<div class="b c k peach nick" style="left:96px;top:527px;width:209px;height:24px;">Nszr</div>
<div class="b c k peach" style="left:305px;top:527px;width:92px;height:24px;text-align:left;padding-left:3px;">04.04.2017</div>
<div class="b c k peach ctr" style="left:397px;top:527px;width:61px;height:24px;">185</div>
<div class="b c k peach" style="left:458px;top:527px;width:70px;height:24px;text-align:right;padding-right:4px">1</div>
<div class="b c k peach ctr" style="left:46px;top:551px;width:50px;height:24px;">3</div>
<div class="b c k peach nick" style="left:96px;top:551px;width:209px;height:24px;">Key-D</div>
<div class="b c k peach" style="left:305px;top:551px;width:92px;height:24px;text-align:left;padding-left:3px;">26.06.2017</div>
<div class="b c k peach ctr" style="left:397px;top:551px;width:61px;height:24px;">102</div>
<div class="b c k peach" style="left:458px;top:551px;width:70px;height:24px;padding-left:3px">выбор</div>
<div class="b c k peach ctr" style="left:46px;top:575px;width:50px;height:24px;">4</div>
<div class="b c k peach nick" style="left:96px;top:575px;width:209px;height:24px;">ТИЕ</div>
<div class="b c k peach" style="left:305px;top:575px;width:92px;height:24px;text-align:left;padding-left:3px;">26.06.2017</div>
<div class="b c k peach ctr" style="left:397px;top:575px;width:61px;height:24px;">102</div>
<div class="b c k peach" style="left:458px;top:575px;width:70px;height:24px;padding-left:3px"></div>
<div class="b c k peach ctr" style="left:46px;top:599px;width:50px;height:24px;">5</div>
<div class="b c k peach nick" style="left:96px;top:599px;width:209px;height:24px;">Abdujalil</div>
<div class="b c k peach" style="left:305px;top:599px;width:92px;height:24px;text-align:left;padding-left:3px;">26.06.2017</div>
<div class="b c k peach ctr" style="left:397px;top:599px;width:61px;height:24px;">102</div>
<div class="b c k peach" style="left:458px;top:599px;width:70px;height:24px;padding-left:3px"></div>
<div class="b c k peach ctr" style="left:46px;top:623px;width:50px;height:24px;">6</div>
<div class="b c k peach nick" style="left:96px;top:623px;width:209px;height:24px;">Alexuna</div>
<div class="b c k peach" style="left:305px;top:623px;width:92px;height:24px;text-align:left;padding-left:3px;">14.06.2017</div>
<div class="b c k peach ctr" style="left:397px;top:623px;width:61px;height:24px;">114</div>
<div class="b c k peach" style="left:458px;top:623px;width:70px;height:24px;padding-left:3px"></div>
<div class="b c k peach ctr" style="left:46px;top:647px;width:50px;height:24px;">7</div>
<div class="b c k peach nick" style="left:96px;top:647px;width:209px;height:24px;">Ed77</div>
<div class="b c k peach" style="left:305px;top:647px;width:92px;height:24px;text-align:left;padding-left:3px;">26.06.2017</div>
<div class="b c k peach ctr" style="left:397px;top:647px;width:61px;height:24px;">102</div>
<div class="b c k peach" style="left:458px;top:647px;width:70px;height:24px;padding-left:3px"></div>
<div class="b c k peach ctr" style="left:46px;top:671px;width:50px;height:24px;">8</div>
<div class="b c k peach nick" style="left:96px;top:671px;width:209px;height:24px;">Elena Aleksandrovna</div>
<div class="b c k peach" style="left:305px;top:671px;width:92px;height:24px;text-align:left;padding-left:3px;">26.06.2017</div>
<div class="b c k peach ctr" style="left:397px;top:671px;width:61px;height:24px;">102</div>
<div class="b c k peach" style="left:458px;top:671px;width:70px;height:24px;padding-left:3px"></div>
<div class="b c k peach ctr" style="left:46px;top:695px;width:50px;height:24px;">9</div>
<div class="b c k peach nick" style="left:96px;top:695px;width:209px;height:24px;">Lenochka</div>
<div class="b c k peach" style="left:305px;top:695px;width:92px;height:24px;text-align:left;padding-left:3px;">26.06.2017</div>
<div class="b c k peach ctr" style="left:397px;top:695px;width:61px;height:24px;">102</div>
<div class="b c k peach" style="left:458px;top:695px;width:70px;height:24px;padding-left:3px"></div>
<div class="b c k peach ctr" style="left:46px;top:719px;width:50px;height:24px;">10</div>
<div class="b c k peach nick" style="left:96px;top:719px;width:209px;height:24px;">nikei126212</div>
<div class="b c k peach" style="left:305px;top:719px;width:92px;height:24px;text-align:left;padding-left:3px;">26.06.2017</div>
<div class="b c k peach ctr" style="left:397px;top:719px;width:61px;height:24px;">102</div>
<div class="b c k peach" style="left:458px;top:719px;width:70px;height:24px;padding-left:3px"></div>
<div class="b c k peach ctr" style="left:46px;top:743px;width:50px;height:24px;">11</div>
<div class="b c k peach nick" style="left:96px;top:743px;width:209px;height:24px;">Numiel</div>
<div class="b c k peach" style="left:305px;top:743px;width:92px;height:24px;text-align:left;padding-left:3px;">26.06.2017</div>
<div class="b c k peach ctr" style="left:397px;top:743px;width:61px;height:24px;">102</div>
<div class="b c k peach" style="left:458px;top:743px;width:70px;height:24px;padding-left:3px"></div>
<div class="b c k peach ctr" style="left:46px;top:767px;width:50px;height:24px;">12</div>
<div class="b c k peach nick" style="left:96px;top:767px;width:209px;height:24px;">Sayonara</div>
<div class="b c k peach" style="left:305px;top:767px;width:92px;height:24px;text-align:left;padding-left:3px;background:#ea9999;">27.06.2017</div>
<div class="b c k peach ctr" style="left:397px;top:767px;width:61px;height:24px;">101</div>
<div class="b c k peach" style="left:458px;top:767px;width:70px;height:24px;padding-left:3px"></div>
<div class="b c k peach ctr" style="left:46px;top:791px;width:50px;height:26px;padding-top:2px;">13</div>
<div class="b c k peach nick" style="left:96px;top:791px;width:209px;height:26px;padding-top:2px;">Vik11</div>
<div class="b c k peach" style="left:305px;top:791px;width:92px;height:26px;padding-top:2px;text-align:left;padding-left:3px;">26.06.2017</div>
<div class="b c k peach ctr" style="left:397px;top:791px;width:61px;height:26px;padding-top:2px;">102</div>
<div class="b c k peach" style="left:458px;top:791px;width:70px;height:26px;padding-top:2px;padding-left:3px"></div>
<div class="b c k peach ctr" style="left:46px;top:817px;width:50px;height:24px;">14</div>
<div class="b c k peach nick" style="left:96px;top:817px;width:209px;height:24px;">Алёна Рыськова</div>
<div class="b c k peach" style="left:305px;top:817px;width:92px;height:24px;text-align:left;padding-left:3px;">10.02.2017</div>
<div class="b c k peach ctr" style="left:397px;top:817px;width:61px;height:24px;">238</div>
<div class="b c k peach" style="left:458px;top:817px;width:70px;height:24px;padding-left:3px"></div>
<div class="b c k peach ctr" style="left:46px;top:841px;width:50px;height:24px;">15</div>
<div class="b c k peach nick" style="left:96px;top:841px;width:209px;height:24px;">Антон Фарутин</div>
<div class="b c k peach" style="left:305px;top:841px;width:92px;height:24px;text-align:left;padding-left:3px;">25.06.2017</div>
<div class="b c k peach ctr" style="left:397px;top:841px;width:61px;height:24px;">103</div>
<div class="b c k peach" style="left:458px;top:841px;width:70px;height:24px;padding-left:3px"></div>
<div class="b c k peach ctr" style="left:46px;top:865px;width:50px;height:24px;">16</div>
<div class="b c k peach nick" style="left:96px;top:865px;width:209px;height:24px;">Артур Болотов</div>
<div class="b c k peach" style="left:305px;top:865px;width:92px;height:24px;text-align:left;padding-left:3px;">17.06.2017</div>
<div class="b c k peach ctr" style="left:397px;top:865px;width:61px;height:24px;">111</div>
<div class="b c k peach" style="left:458px;top:865px;width:70px;height:24px;padding-left:3px"></div>
<div class="b c k peach ctr" style="left:46px;top:889px;width:50px;height:24px;">17</div>
<div class="b c k peach nick" style="left:96px;top:889px;width:209px;height:24px;">ВероникаHealthy</div>
<div class="b c k peach" style="left:305px;top:889px;width:92px;height:24px;text-align:left;padding-left:3px;">26.06.2017</div>
<div class="b c k peach ctr" style="left:397px;top:889px;width:61px;height:24px;">102</div>
<div class="b c k peach" style="left:458px;top:889px;width:70px;height:24px;padding-left:3px"></div>
<div class="b c k peach ctr" style="left:46px;top:913px;width:50px;height:24px;">18</div>
<div class="b c k peach nick" style="left:96px;top:913px;width:209px;height:24px;">Дмитрий Саныч</div>
<div class="b c k peach" style="left:305px;top:913px;width:92px;height:24px;text-align:left;padding-left:3px;">26.06.2017</div>
<div class="b c k peach ctr" style="left:397px;top:913px;width:61px;height:24px;">102</div>
<div class="b c k peach" style="left:458px;top:913px;width:70px;height:24px;padding-left:3px"></div>
<div class="b" style="left:46px;top:502px;width:482px;height:1px;background:#000"></div>
<div class="b c k" style="left:532px;top:503px;width:91px;height:24px;background:#6fa8dc;font-size:12.8px;letter-spacing:0;padding-left:3px;line-height:28px">по собств.</div>
<div class="b c k" style="left:623px;top:503px;width:89px;height:24px;background:#6fa8dc;font-size:12.8px;letter-spacing:0;padding-left:3px;line-height:28px">по собств.</div>
<div class="b c k" style="left:712px;top:503px;width:90px;height:24px;background:#6fa8dc;font-size:12.8px;letter-spacing:0;padding-left:3px;line-height:28px">по собств.</div>
<div class="b c k red" style="left:532px;top:527px;width:91px;height:24px;padding-left:17px;color:#850000;line-height:21px">срыв<span style="position:absolute;right:6px;top:10px;width:0;height:0;border-left:4px solid transparent;border-right:4px solid transparent;border-top:5px solid #fff"></span></div>
<div class="b c k red" style="left:623px;top:527px;width:89px;height:24px;padding-left:17px;color:#850000;line-height:21px">срыв<span style="position:absolute;right:6px;top:10px;width:0;height:0;border-left:4px solid transparent;border-right:4px solid transparent;border-top:5px solid #fff"></span></div>
<div class="b c k" style="left:712px;top:527px;width:90px;height:24px;background:#d5a6bd;padding-left:3px">выбытие</div>
<div class="b c k red" style="left:532px;top:551px;width:91px;height:24px;padding-left:17px;color:#850000;line-height:21px">срыв<span style="position:absolute;right:6px;top:10px;width:0;height:0;border-left:4px solid transparent;border-right:4px solid transparent;border-top:5px solid #fff"></span></div>
<div class="b c k org" style="left:623px;top:551px;width:89px;height:24px;padding-left:3px;font-size:14.67px;letter-spacing:-0.29px;line-height:25px;">нет отметки</div>
<div class="b c k org" style="left:712px;top:551px;width:90px;height:24px;padding-left:3px;font-size:14.67px;letter-spacing:-0.29px;line-height:25px;">нет отметки</div>
<div class="b c k yel" style="left:532px;top:575px;width:91px;height:24px;padding-left:7px;line-height:24px;">не курю<span style="position:absolute;right:6px;top:10px;width:0;height:0;border-left:4px solid transparent;border-right:4px solid transparent;border-top:5px solid #8a8a00"></span></div>
<div class="b c k org" style="left:623px;top:575px;width:89px;height:24px;padding-left:3px;font-size:14.67px;letter-spacing:-0.29px;line-height:25px;">нет отметки</div>
<div class="b c k org" style="left:712px;top:575px;width:90px;height:24px;padding-left:3px;font-size:14.67px;letter-spacing:-0.29px;line-height:25px;">нет отметки</div>
<div class="b c k yel" style="left:532px;top:599px;width:91px;height:24px;padding-left:7px;line-height:24px;">не курю<span style="position:absolute;right:6px;top:10px;width:0;height:0;border-left:4px solid transparent;border-right:4px solid transparent;border-top:5px solid #8a8a00"></span></div>
<div class="b c k org" style="left:623px;top:599px;width:89px;height:24px;padding-left:3px;font-size:14.67px;letter-spacing:-0.29px;line-height:25px;">нет отметки</div>
<div class="b c k org" style="left:712px;top:599px;width:90px;height:24px;padding-left:3px;font-size:14.67px;letter-spacing:-0.29px;line-height:25px;">нет отметки</div>
<div class="b c k yel" style="left:532px;top:623px;width:91px;height:24px;padding-left:7px;line-height:24px;">не курю<span style="position:absolute;right:6px;top:10px;width:0;height:0;border-left:4px solid transparent;border-right:4px solid transparent;border-top:5px solid #8a8a00"></span></div>
<div class="b c k org" style="left:623px;top:623px;width:89px;height:24px;padding-left:3px;font-size:14.67px;letter-spacing:-0.29px;line-height:25px;">нет отметки</div>
<div class="b c k org" style="left:712px;top:623px;width:90px;height:24px;padding-left:3px;font-size:14.67px;letter-spacing:-0.29px;line-height:25px;">нет отметки</div>
<div class="b c k yel" style="left:532px;top:647px;width:91px;height:24px;padding-left:7px;line-height:24px;">не курю<span style="position:absolute;right:6px;top:10px;width:0;height:0;border-left:4px solid transparent;border-right:4px solid transparent;border-top:5px solid #8a8a00"></span></div>
<div class="b c k org" style="left:623px;top:647px;width:89px;height:24px;padding-left:3px;font-size:14.67px;letter-spacing:-0.29px;line-height:25px;">нет отметки</div>
<div class="b c k org" style="left:712px;top:647px;width:90px;height:24px;padding-left:3px;font-size:14.67px;letter-spacing:-0.29px;line-height:25px;">нет отметки</div>
<div class="b c k yel" style="left:532px;top:671px;width:91px;height:24px;padding-left:7px;line-height:24px;">не курю<span style="position:absolute;right:6px;top:10px;width:0;height:0;border-left:4px solid transparent;border-right:4px solid transparent;border-top:5px solid #8a8a00"></span></div>
<div class="b c k org" style="left:623px;top:671px;width:89px;height:24px;padding-left:3px;font-size:14.67px;letter-spacing:-0.29px;line-height:25px;">нет отметки</div>
<div class="b c k org" style="left:712px;top:671px;width:90px;height:24px;padding-left:3px;font-size:14.67px;letter-spacing:-0.29px;line-height:25px;">нет отметки</div>
<div class="b c k yel" style="left:532px;top:695px;width:91px;height:24px;padding-left:7px;line-height:24px;">не курю<span style="position:absolute;right:6px;top:10px;width:0;height:0;border-left:4px solid transparent;border-right:4px solid transparent;border-top:5px solid #8a8a00"></span></div>
<div class="b c k org" style="left:623px;top:695px;width:89px;height:24px;padding-left:3px;font-size:14.67px;letter-spacing:-0.29px;line-height:25px;">нет отметки</div>
<div class="b c k org" style="left:712px;top:695px;width:90px;height:24px;padding-left:3px;font-size:14.67px;letter-spacing:-0.29px;line-height:25px;">нет отметки</div>
<div class="b c k yel" style="left:532px;top:719px;width:91px;height:24px;padding-left:7px;line-height:24px;">не курю<span style="position:absolute;right:6px;top:10px;width:0;height:0;border-left:4px solid transparent;border-right:4px solid transparent;border-top:5px solid #8a8a00"></span></div>
<div class="b c k org" style="left:623px;top:719px;width:89px;height:24px;padding-left:3px;font-size:14.67px;letter-spacing:-0.29px;line-height:25px;">нет отметки</div>
<div class="b c k org" style="left:712px;top:719px;width:90px;height:24px;padding-left:3px;font-size:14.67px;letter-spacing:-0.29px;line-height:25px;">нет отметки</div>
<div class="b c k yel" style="left:532px;top:743px;width:91px;height:24px;padding-left:7px;line-height:24px;">не курю<span style="position:absolute;right:6px;top:10px;width:0;height:0;border-left:4px solid transparent;border-right:4px solid transparent;border-top:5px solid #8a8a00"></span></div>
<div class="b c k org" style="left:623px;top:743px;width:89px;height:24px;padding-left:3px;font-size:14.67px;letter-spacing:-0.29px;line-height:25px;">нет отметки</div>
<div class="b c k org" style="left:712px;top:743px;width:90px;height:24px;padding-left:3px;font-size:14.67px;letter-spacing:-0.29px;line-height:25px;">нет отметки</div>
<div class="b c k yel" style="left:532px;top:767px;width:91px;height:24px;padding-left:7px;line-height:24px;">не курю<span style="position:absolute;right:6px;top:10px;width:0;height:0;border-left:4px solid transparent;border-right:4px solid transparent;border-top:5px solid #8a8a00"></span></div>
<div class="b c k org" style="left:623px;top:767px;width:89px;height:24px;padding-left:3px;font-size:14.67px;letter-spacing:-0.29px;line-height:25px;">нет отметки</div>
<div class="b c k org" style="left:712px;top:767px;width:90px;height:24px;padding-left:3px;font-size:14.67px;letter-spacing:-0.29px;line-height:25px;">нет отметки</div>
<div class="b c k yel" style="left:532px;top:791px;width:91px;height:26px;padding-left:7px;line-height:24px;padding-top:2px">не курю<span style="position:absolute;right:6px;top:10px;width:0;height:0;border-left:4px solid transparent;border-right:4px solid transparent;border-top:5px solid #8a8a00"></span></div>
<div class="b c k org" style="left:623px;top:791px;width:89px;height:26px;padding-left:3px;font-size:14.67px;letter-spacing:-0.29px;line-height:25px;padding-top:2px">нет отметки</div>
<div class="b c k org" style="left:712px;top:791px;width:90px;height:26px;padding-left:3px;font-size:14.67px;letter-spacing:-0.29px;line-height:25px;padding-top:2px">нет отметки</div>
<div class="b c k org" style="left:532px;top:817px;width:91px;height:24px;padding-left:3px;font-size:14.67px;letter-spacing:-0.29px;line-height:25px;">нет отметки</div>
<div class="b c k org" style="left:623px;top:817px;width:89px;height:24px;padding-left:3px;font-size:14.67px;letter-spacing:-0.29px;line-height:25px;">нет отметки</div>
<div class="b c k org" style="left:712px;top:817px;width:90px;height:24px;padding-left:3px;font-size:14.67px;letter-spacing:-0.29px;line-height:25px;">нет отметки</div>
<div class="b c k org" style="left:532px;top:841px;width:91px;height:24px;padding-left:3px;font-size:14.67px;letter-spacing:-0.29px;line-height:25px;">нет отметки</div>
<div class="b c k org" style="left:623px;top:841px;width:89px;height:24px;padding-left:3px;font-size:14.67px;letter-spacing:-0.29px;line-height:25px;">нет отметки</div>
<div class="b c k org" style="left:712px;top:841px;width:90px;height:24px;padding-left:3px;font-size:14.67px;letter-spacing:-0.29px;line-height:25px;">нет отметки</div>
<div class="b c k org" style="left:532px;top:865px;width:91px;height:24px;padding-left:3px;font-size:14.67px;letter-spacing:-0.29px;line-height:25px;">нет отметки</div>
<div class="b c k org" style="left:623px;top:865px;width:89px;height:24px;padding-left:3px;font-size:14.67px;letter-spacing:-0.29px;line-height:25px;">нет отметки</div>
<div class="b c k org" style="left:712px;top:865px;width:90px;height:24px;padding-left:3px;font-size:14.67px;letter-spacing:-0.29px;line-height:25px;">нет отметки</div>
<div class="b c k org" style="left:532px;top:889px;width:91px;height:24px;padding-left:3px;font-size:14.67px;letter-spacing:-0.29px;line-height:25px;">нет отметки</div>
<div class="b c k org" style="left:623px;top:889px;width:89px;height:24px;padding-left:3px;font-size:14.67px;letter-spacing:-0.29px;line-height:25px;">нет отметки</div>
<div class="b c k org" style="left:712px;top:889px;width:90px;height:24px;padding-left:3px;font-size:14.67px;letter-spacing:-0.29px;line-height:25px;">нет отметки</div>
<div class="b c k org" style="left:532px;top:913px;width:91px;height:24px;padding-left:3px;font-size:14.67px;letter-spacing:-0.29px;line-height:25px;">нет отметки</div>
<div class="b c k org" style="left:623px;top:913px;width:89px;height:24px;padding-left:3px;font-size:14.67px;letter-spacing:-0.29px;line-height:25px;">нет отметки</div>
<div class="b c k org" style="left:712px;top:913px;width:90px;height:24px;padding-left:3px;font-size:14.67px;letter-spacing:-0.29px;line-height:25px;">нет отметки</div>
<div class="b" style="left:532px;top:502px;width:270px;height:1px;background:#000"></div>
</div>
<!-- ===== browser frame ===== -->
<div class="b" style="left:0;top:0;width:1280px;height:29px;background:#8b89d8"></div>
<svg class="b" style="left:0;top:0" width="1280" height="29" viewBox="0 0 1280 29">
  <path d="M8 28 L19 4 Q20 2 23 2 L194 2 Q197 2 198 4 L209 28 Z" fill="#c6c5e6" stroke="#7a78b8" stroke-width="1"/>
  <path d="M204 29 L215 4 Q216 2 219 2 L389 2 Q392 2 393 4 L405 29 Z" fill="#f2f2f2" stroke="#9a98c8" stroke-width="1"/>
  <path d="M402 8 L427 8 Q429 8 430 10 L435 21 Q436 23 433 23 L410 23 Q408 23 407 21 L401 10 Q400 8 402 8 Z" fill="#c6c5e6" stroke="#9f9dd6" stroke-width="1"/>
  <rect x="23" y="7" width="15" height="15" rx="1.5" fill="#e8502f"/>
  <path d="M26 17.5 h8 v1.8 h-8 z M35 17.5 h1 v1.8 h-1z M30 11 q3 .5 3 2.5 q2 0 2 2" fill="none" stroke="#fff" stroke-width="1.2"/>
  <rect x="26" y="17.3" width="8" height="2" fill="#fff"/>
  <rect x="215" y="7" width="16" height="16" rx="2" fill="#23a566"/>
  <path d="M218.500 11 h9 v8 h-9 z M218.500 13.700 h9 M218.500 16.300 h9 M221.700 11 v8" fill="none" stroke="#fff" stroke-width="1.3"/>
  <path d="M185 10.500 l7.500 7.500 M192.500 10.500 l-7.500 7.500" stroke="#555" stroke-width="1.6" fill="none"/>
  <path d="M378 10.500 l7.500 7.500 M385.500 10.500 l-7.500 7.500" stroke="#444" stroke-width="1.6" fill="none"/>
  <!-- window controls -->
  <path d="M1204.500 10.500 h7 v7 h-7 z M1206.500 10.500 v-2 h7 v7 h-2" fill="none" stroke="#111" stroke-width="1"/>
  <path d="M1250 8 l10 10 M1260 8 l-10 10" stroke="#111" stroke-width="1.1" fill="none"/>
  <!-- redaction scribble -->
  <path d="M1062 6 Q1110 3 1160 4 Q1172 3 1170 13 L1142 15 L1141 25 Q1105 28 1071 27 L1069 15 L1062 13 Z" fill="#fff"/>
</svg>
<div class="b" style="left:44px;top:6px;width:134px;height:18px;font-size:12px;line-height:18px;letter-spacing:-0.1px;color:#3c3c4a">#20_2 Черная Жемчужина</div>
<div class="b" style="left:150px;top:4px;width:30px;height:22px;background:linear-gradient(90deg,rgba(198,197,230,0),#c6c5e6 80%)"></div>
<div class="b" style="left:237px;top:6px;width:134px;height:18px;font-size:12px;line-height:18px;letter-spacing:-0.1px;color:#222">20 стодневка/ Отметки - Go</div>
<div class="b" style="left:344px;top:4px;width:30px;height:22px;background:linear-gradient(90deg,rgba(242,242,242,0),#f2f2f2 70%)"></div>

<!-- ===== address bar row ===== -->
<div class="b" style="left:0;top:29px;width:1280px;height:36px;background:#f2f2f2;border-bottom:1px solid #d0d0d0"></div>
<div class="b" style="left:120px;top:33px;width:932px;height:28px;background:#fff;border:1px solid #b9b9b9;border-radius:3px"></div>
<svg class="b" style="left:0;top:29px" width="1280" height="36" viewBox="0 0 1280 36">
  <path d="M12 18 h14 M18 12 l-6 6 l6 6" fill="none" stroke="#d0d0d0" stroke-width="1.8"/>
  <path d="M38 18 h14 M46 12 l6 6 l-6 6" fill="none" stroke="#d0d0d0" stroke-width="1.8"/>
  <path d="M79.500 13.200 A6.300 6.300 0 1 0 80.300 18" fill="none" stroke="#444" stroke-width="2"/>
  <path d="M80.800 9.500 v6 h-6 z" fill="#444"/>
  <path d="M94.500 18.500 l7.500 -7 l7.500 7 M97 17 v7.500 h10 v-7.500" fill="none" stroke="#444" stroke-width="2"/>
  <rect x="130" y="16" width="8" height="7" rx="1" fill="#1a8a4c"/>
  <path d="M131.700 16 v-2 a2.300 2.300 0 0 1 4.600 0 v2" fill="none" stroke="#1a8a4c" stroke-width="1.500"/>
  <path d="M225.500 10 v17" stroke="#c4c4c4" stroke-width="1"/>
  <path d="M1038 11.200 l1.800 4 4.300 .4 -3.200 2.900 1 4.200 -3.900 -2.300 -3.900 2.300 1 -4.200 -3.200 -2.900 4.300 -.4 z" fill="none" stroke="#444" stroke-width="1.400" stroke-linejoin="round"/>
  <path d="M1059 6 Q1150 4 1255 6 L1255 31 Q1140 33 1062 31 Z" fill="#fff"/>
  <circle cx="1262.500" cy="13.500" r="1.700" fill="#444"/><circle cx="1262.500" cy="19" r="1.700" fill="#444"/><circle cx="1262.500" cy="24.500" r="1.700" fill="#444"/>
</svg>
<div class="b" style="left:147px;top:37px;height:20px;font-size:14.2px;line-height:20px;color:#1a8a4c">Надежный</div>
<div class="b" style="left:233px;top:37px;height:20px;font-size:14.5px;line-height:20px;color:#777"><span style="color:#1a8a4c">https</span>://<span style="color:#111;letter-spacing:-0.15px">docs.google.com</span><span style="letter-spacing:-0.37px">/spreadsheets/d/17WnvvIUozew9ncWapn5sU56r7KgoMOzw1Qa4uCUBGjw/edit#gid=791281082</span></div>

<!-- ===== docs header ===== -->
<div class="b" style="left:0;top:65px;width:40px;height:62px;background:#1e9e5a"></div>
<svg class="b" style="left:0;top:65px" width="40" height="62" viewBox="0 0 40 62">
  <path d="M11.500 23 h18 v15 h-18 z M11.500 28 h18 M11.500 33 h18 M17.500 23 v15" fill="none" stroke="#fff" stroke-width="1.600"/>
</svg>
<div class="b" style="left:60px;top:74px;height:24px;font-size:18px;line-height:24px;color:#111">20 стодневка/ Отметки</div>
<svg class="b" style="left:267px;top:74px" width="60" height="24" viewBox="0 0 60 24">
  <path d="M12 4.500 l2.100 4.900 5.300 .5 -4 3.500 1.200 5.200 -4.600 -2.800 -4.600 2.800 1.200 -5.200 -4 -3.500 5.300 -.5 z" fill="none" stroke="#c8c8c8" stroke-width="1.200" stroke-linejoin="round"/>
  <path d="M37 5 h5 l6 10 h-4.500 z M36 6 l2.500 4.200 -4.500 7.800 -2.500 -4.200z M36 19 l2.500 -4 h5 v4z" fill="#9a9a9a"/>
  <path d="M46 18 h5 M48.500 15.500 v5" stroke="#9a9a9a" stroke-width="1.500"/>
</svg>
<div class="b mn" style="left:60px;top:101px">Файл</div>
<div class="b mn" style="left:108px;top:101px">Правка</div>
<div class="b mn" style="left:168px;top:101px">Вид</div>
<div class="b mn" style="left:208px;top:101px">Вставка</div>
<div class="b mn" style="left:272px;top:101px">Формат</div>
<div class="b mn" style="left:333px;top:101px">Данные</div>
<div class="b mn" style="left:397px;top:101px">Инструменты</div>
<div class="b mn" style="left:494px;top:101px">Дополнения</div>
<div class="b mn" style="left:584px;top:101px">Справка</div>
<div class="b mn" style="left:657px;top:101px;color:#777">Последнее изменение: аноним вчера в 23:45</div>
<div class="b" style="left:1008px;top:92px;width:92px;height:29px;background:#f5f5f5;border:1px solid #dcdcdc;border-radius:2px;font-size:11px;font-weight:bold;color:#333;text-align:center;line-height:27px">Комментарии</div>
<div class="b" style="left:1109px;top:92px;width:141px;height:29px;background:#4a8af4;border:1px solid #3b78e0;border-radius:2px;font-size:11px;font-weight:bold;color:#fff;line-height:27px;padding-left:26px">Настройки доступа</div>
<svg class="b" style="left:1114px;top:96px" width="20" height="20" viewBox="0 0 20 20">
  <circle cx="8.500" cy="5" r="2.600" fill="#fff"/>
  <path d="M3.500 12.500 q0 -4 5 -4 q5 0 5 4 z" fill="#fff"/>
  <path d="M6 15.500 h-1 a1.500 1.500 0 0 1 0 -3 h2 M10 12.500 h2 a1.500 1.500 0 0 1 0 3 h-2 M6.500 14 h4" fill="none" stroke="#fff" stroke-width="1.200"/>
</svg>

<!-- ===== toolbar ===== -->
<div class="b" style="left:0;top:126px;width:1280px;height:37px;background:#fafafa;border-top:1px solid #e4e4e4;border-bottom:1px solid #dcdcdc"></div>
<svg class="b" style="left:0;top:127px" width="1280" height="36" viewBox="0 0 1280 36">
  <g stroke="#e2e2e2" stroke-width="1">
    <path d="M181.500 1 v34 M252.500 1 v34 M414.500 1 v34 M421.500 1 v34 M491.500 1 v34 M627.500 1 v34 M757.500 1 v34 M920.500 1 v34 M1095.500 1 v34"/>
  </g>
  <g transform="translate(0,-1)">
  <rect x="496" y="5" width="28" height="27" fill="#eeeeee"/>
  <rect x="710" y="5" width="28" height="27" fill="#eeeeee"/>
  <!-- print -->
  <g fill="#555">
    <path d="M68.500 10 h9 v3 h-9z"/>
    <path d="M66.500 14 h13 a2 2 0 0 1 2 2 v6 h-3.500 v-3 h-10 v3 h-3.500 v-6 a2 2 0 0 1 2 -2z"/>
    <path d="M69.500 20 h7 v5 h-7z"/>
  </g>
  <!-- undo / redo -->
  <path d="M96 21.500 q6.500 -8 14.500 0" fill="none" stroke="#555" stroke-width="2.200"/>
  <path d="M94.500 14.500 v7.500 h7.500 z" fill="#555"/>
  <path d="M138.500 21.500 q-6.500 -8 -14.500 0" fill="none" stroke="#555" stroke-width="2.200"/>
  <path d="M140 14.500 v7.500 h-7.500 z" fill="#555"/>
  <!-- paint format -->
  <path d="M157 11 h10 v5 h-10z" fill="#cfcfcf"/>
  <path d="M167 13.500 h2.500 v5 h-6.500 v7" fill="none" stroke="#cfcfcf" stroke-width="2"/>
  <!-- zoom -->
  <text x="197" y="22" style="font-size:11px;font-weight:bold;fill:#444;font-family:'Liberation Sans',sans-serif">100%</text>
  <path d="M236 16 h7 l-3.500 4z" fill="#777"/>
  <!-- currency etc -->
  <text x="265" y="22.500" class="tt" style="font-size:14px">р.</text>
  <text x="293" y="23" class="tt" style="font-size:14px">%</text>
  <text x="322" y="22" class="tt">.0</text>
  <path d="M336 26 h-6 m2.500 -2.500 l-2.500 2.500 2.500 2.500" fill="none" stroke="#c4c4c4" stroke-width="1.200"/>
  <text x="350" y="22" class="tt">.00</text>
  <path d="M361 26 h6 m-2.500 -2.500 l2.500 2.500 -2.500 2.500" fill="none" stroke="#c4c4c4" stroke-width="1.200"/>
  <text x="378" y="22" class="tt" style="font-size:11px">123</text>
  <path d="M399 17 h6 l-3 3.500z" fill="#cfcfcf"/>
  <text x="437" y="22" class="tt" style="font-size:11px">24</text>
  <path d="M476 17 h6 l-3 3.500z" fill="#d4d4d4"/>
  <!-- B I S A -->
  <text x="503.500" y="24" style="font-size:16px;font-weight:bold;fill:#b0b0b0;font-family:'Liberation Sans',sans-serif">B</text>
  <text x="536" y="24" style="font-size:16px;font-style:italic;font-weight:bold;fill:#c4c4c4;font-family:'Liberation Serif',serif">I</text>
  <text x="564.500" y="24" style="font-size:15px;fill:#c4c4c4;font-family:'Liberation Sans',sans-serif">S</text>
  <path d="M563 18.500 h14" stroke="#c4c4c4" stroke-width="1.200"/>
  <text x="592" y="22" style="font-size:16px;fill:#c4c4c4;font-family:'Liberation Sans',sans-serif">A</text>
  <rect x="588" y="25" width="21" height="4" fill="#a9c3d0"/>
  <path d="M612 17 h6 l-3 3.500z" fill="#d4d4d4"/>
  <!-- fill color -->
  <path d="M642 11 l6.500 6.500 -5 5 -5.500 -5.500 5 -5z" fill="none" stroke="#c4c4c4" stroke-width="1.600"/>
  <path d="M639 17.500 h9 l-4.500 4.500z" fill="#c4c4c4"/>
  <circle cx="650" cy="22" r="1.400" fill="#c4c4c4"/>
  <rect x="635" y="26" width="20" height="3.500" fill="#ffff99"/>
  <path d="M658 17 h6 l-3 3.500z" fill="#d4d4d4"/>
  <!-- borders -->
  <path d="M676.500 12.500 h13 v13 h-13z M683 12.500 v13 M676.500 19 h13" fill="none" stroke="#c8c8c8" stroke-width="1.700"/>
  <path d="M697 17 h6 l-3 3.500z" fill="#d4d4d4"/>
  <!-- merge -->
  <path d="M717 16 v-3.500 h4 M726 12.500 h4 v3.500 M717 22 v3.500 h4 M726 25.500 h4 v-3.500 M716.500 19 h5.500 m-2 -2 l2 2 -2 2 M731 19 h-5.500 m2 -2 l-2 2 2 2" fill="none" stroke="#aaa" stroke-width="1.600"/>
  <path d="M742 17 h6 l-3 3.500z" fill="#d4d4d4"/>
  <!-- h align -->
  <path d="M767 13 h14 M769.500 17 h9 M767 21 h14 M769.500 25 h9" stroke="#c8c8c8" stroke-width="1.600"/>
  <path d="M788 17 h6 l-3 3.500z" fill="#d4d4d4"/>
  <!-- v align -->
  <path d="M813 12 v9 m-3 -3 l3 3 3 -3 M807 25 h12" fill="none" stroke="#c8c8c8" stroke-width="1.600"/>
  <path d="M827 17 h6 l-3 3.500z" fill="#d4d4d4"/>
  <!-- wrap -->
  <path d="M846 12 v14 M853 12 v4 M853 22 v4 M849 19 h9 m-2.500 -2.500 l2.500 2.500 -2.500 2.500" fill="none" stroke="#c8c8c8" stroke-width="1.600"/>
  <path d="M866 17 h6 l-3 3.500z" fill="#d4d4d4"/>
  <!-- rotate -->
  <path d="M884 13 l9 3 -4 5 z M888 25 l9 -9 m-3.500 0 h3.500 v3.500" fill="none" stroke="#c8c8c8" stroke-width="1.500"/>
  <path d="M905 17 h6 l-3 3.500z" fill="#d4d4d4"/>
  <!-- link -->
  <path d="M937 14.500 h-3 a3.500 3.500 0 0 0 0 7 h3 M941 14.500 h3 a3.500 3.500 0 0 1 0 7 h-3 M935 18 h8" fill="none" stroke="#c8c8c8" stroke-width="1.600"/>
  <!-- comment -->
  <path d="M961 10.500 h15 v13 h-2.500 l2.500 3.500 -5 -3.500 h-10z" fill="#555"/>
  <path d="M965 17 h7 M968.500 13.500 v7" stroke="#fff" stroke-width="1.700"/>
  <!-- chart -->
  <path d="M992 11.500 h14 v14 h-14z" fill="none" stroke="#555" stroke-width="1.800"/>
  <path d="M996 23 v-5 M999 23 v-8.500 M1002 23 v-3.500" stroke="#555" stroke-width="1.800"/>
  <!-- filter -->
  <path d="M1020.500 12.500 h13 l-5 6 v5.500 h-3 v-5.500z" fill="none" stroke="#555" stroke-width="1.800" stroke-linejoin="round"/>
  <path d="M1041 17 h6 l-3 3.500z" fill="#666"/>
  <!-- sigma -->
  <path d="M1071 15 v-2.500 h-10 l5 6.500 -5 6.500 h10 v-2.500" fill="none" stroke="#c8c8c8" stroke-width="1.600"/>
  <path d="M1080 17 h6 l-3 3.500z" fill="#d4d4d4"/>
  <!-- Ру -->
  <text x="1104" y="23" style="font-size:15px;fill:#555;font-family:'Liberation Sans',sans-serif">Ру</text>
  <path d="M1132 17 h6 l-3 3.500z" fill="#666"/>
  <!-- chevron up -->
  <path d="M1229.500 20.500 l5.500 -5.500 5.500 5.500" fill="none" stroke="#444" stroke-width="2"/>
  </g>
</svg>

<!-- ===== formula bar ===== -->
<div class="b" style="left:0;top:163px;width:1280px;height:23px;background:#fff"></div>
<div class="b" style="left:12px;top:161px;width:26px;height:24px;font-family:'Liberation Serif',serif;font-style:italic;font-size:21px;line-height:24px;color:#b0b0b0">fx</div>
<div class="b" style="left:45px;top:166px;width:1px;height:17px;background:#d8d8d8"></div>
<div class="b" style="left:60px;top:165px;height:18px;font-size:13px;line-height:18px;color:#111">20_2 Черная жемчужина</div>
<!-- ===== scrollbars ===== -->
<div class="b" style="left:1268px;top:186px;width:12px;height:24px;background:#f8f8f8;border-left:1px solid #d8d8d8;border-bottom:1px solid #d8d8d8;border-top:1px solid #ccc"></div>
<div class="b" style="left:1268px;top:210px;width:12px;height:724px;background:#f8f8f8;border-left:1px solid #e4e4e4"></div>
<div class="b" style="left:1270px;top:359px;width:8px;height:25px;background:#c4c4c4"></div>
<div class="b" style="left:1268px;top:901px;width:12px;height:1px;background:#dcdcdc"></div>
<div class="b" style="left:1268px;top:917px;width:12px;height:1px;background:#dcdcdc"></div>
<div class="b" style="left:0;top:933px;width:1280px;height:13px;background:#fafafa;border-top:1px solid #e6e6e6;border-bottom:1px solid #c4c4c4"></div>
<div class="b" style="left:533px;top:935px;width:441px;height:9px;background:#c6c6c6"></div>
<svg class="b" style="left:1230px;top:900px" width="50" height="46" viewBox="0 0 50 46">
  <path d="M40.500 9.500 l3.500 -4 3.500 4z M40.500 23 l3.500 4 3.500 -4z" fill="#8a8a8a"/>
  <path d="M15.500 36 l-3.500 3.500 3.500 3.500z M28.500 36 l3.500 3.500 -3.500 3.500z" fill="#8a8a8a"/>
  <path d="M6.500 34 v11 M22.500 34 v11 M38.500 34 v11" stroke="#dcdcdc" stroke-width="1"/>
</svg>

<!-- ===== sheet tabs bar ===== -->
<div class="b" style="left:0;top:946px;width:1280px;height:38px;background:#eeeeee"></div>
<div class="b" style="left:47px;top:951px;width:18px;height:22px;font-size:20px;line-height:22px;color:#555;text-align:center">+</div>
<svg class="b" style="left:80px;top:956px" width="14" height="14" viewBox="0 0 14 14"><path d="M1 2.500 h12 M1 5.500 h12 M1 8.500 h12 M1 11.500 h12" stroke="#555" stroke-width="1.600"/></svg>
<div class="b st" style="left:116px;width:59px">20_1<i></i><u style="background:#a4c2e8"></u></div>
<div class="b st" style="left:176px;width:59px;background:#fff;color:#222">20_2<i></i><u style="background:#990000"></u></div>
<div class="b st" style="left:236px;width:58px">20_3<i></i><u style="background:#33e033"></u></div>
<div class="b st" style="left:296px;width:58px">20_4<i></i><u style="background:#9900ee"></u></div>
<div class="b st" style="left:355px;width:102px;padding-left:24px">Команды<i style="left:86px"></i></div>
<svg class="b" style="left:363px;top:952px" width="12" height="14" viewBox="0 0 12 14"><rect x="1.500" y="6" width="9" height="7" rx="1" fill="#222"/><path d="M3.500 6 v-2 a2.500 2.500 0 0 1 5 0 v2" fill="none" stroke="#222" stroke-width="1.600"/><circle cx="6" cy="9.500" r="1" fill="#fff"/></svg>
<div class="b" style="left:1131px;top:946px;width:149px;height:38px;background:#fff;border-left:1px solid #dcdcdc"></div>
<svg class="b" style="left:1140px;top:952px" width="24" height="24" viewBox="0 0 24 24">
  <path d="M5 3 h14 a2 2 0 0 1 2 2 v13 a2 2 0 0 1 -2 2 h-4.500 l-2.500 2.500 -2.500 -2.500 h-4.500 a2 2 0 0 1 -2 -2 v-13 a2 2 0 0 1 2 -2z" fill="#0f9d58"/>
  <path d="M12 6.500 q.8 4.200 5 5 q-4.200 .8 -5 5 q-.8 -4.200 -5 -5 q4.200 -.8 5 -5z" fill="#fff"/>
</svg>
<div class="b" style="left:1174px;top:955px;height:18px;font-size:12.6px;line-height:18px;color:#3d9970;letter-spacing:-0.2px">Анализ данных</div>

<!-- ===== taskbar ===== -->
<div class="b" style="left:0;top:984px;width:1280px;height:40px;background:#545280"></div>
<div class="b" style="left:195px;top:984px;width:48px;height:40px;background:#7573b4;border-bottom:2px solid #c9c8ee"></div>
<svg class="b" style="left:0;top:984px" width="1280" height="40" viewBox="0 0 1280 40">
  <!-- start -->
  <path d="M16 14.300 l6.500 -.9 v6.100 h-6.500z M23.500 13.200 l8.500 -1.200 v7.500 h-8.500z M16 20.500 h6.500 v6.100 l-6.500 -.9z M23.500 20.500 h8.500 v7.500 l-8.500 -1.200z" fill="#fff"/>
  <!-- search -->
  <circle cx="74.500" cy="17.500" r="5.200" fill="none" stroke="#fff" stroke-width="1.600"/>
  <path d="M70.800 21.500 l-6.300 6.500" stroke="#fff" stroke-width="1.800"/>
  <!-- task view -->
  <path d="M113.500 14.500 h13 v11 h-13z M111.500 16.500 h-2 v7 h2 M128.500 16.500 h2 v7 h-2" fill="none" stroke="#fff" stroke-width="1.300"/>
  <!-- explorer -->
  <path d="M159 12 h7 l2 2 h11 v14 h-20z" fill="#f0c040"/>
  <path d="M159 16 h20 v12 h-20z" fill="#ffe08a"/>
  <path d="M163 21 h12 v7 h-12z" fill="#4aa8e8"/>
  <path d="M166 24 h6 v4 h-6z" fill="#ffe08a"/>
  <!-- chrome -->
  <circle cx="219" cy="20" r="10" fill="#fff"/>
  <path d="M219 20 L210.340 15 A10 10 0 0 1 227.660 15 Z" fill="#e33b2e"/>
  <path d="M219 20 L227.660 15 A10 10 0 0 1 219 30 Z" fill="#fcc934"/>
  <path d="M219 20 L219 30 A10 10 0 0 1 210.340 15 Z" fill="#30a852"/>
  <circle cx="219" cy="20" r="4.800" fill="#fff"/>
  <circle cx="219" cy="20" r="3.800" fill="#4a8af4"/>
  <!-- tray -->
  <path d="M1074 23.500 l6 -6 6 6" fill="none" stroke="#fff" stroke-width="1.400"/>
  <path d="M1098.500 14.500 h13 v9 h-13z M1105 23.500 v3.500 M1101 27.500 h8 M1096.500 16 v8 M1096.500 14.500 h2" fill="none" stroke="#fff" stroke-width="1.200"/>
  <path d="M1120.500 18 h2.500 l3.500 -3.500 v11 l-3.500 -3.500 h-2.500z" fill="none" stroke="#fff" stroke-width="1.100"/>
  <path d="M1129 17.500 q1.500 2.500 0 5 M1131.500 15.500 q2.500 4.500 0 9 M1134 13.500 q3.500 6.500 0 13" fill="none" stroke="#fff" stroke-width="1.100"/>
  <path d="M1144.500 12.500 h15 v11.500 h-5 l-2.500 2.500 -2.500 -2.500 h-5z M1147.500 15.500 h9 M1147.500 18 h9 M1147.500 20.500 h6" fill="none" stroke="#fff" stroke-width="1.200"/>
  <path d="M1275.500 0 v40" stroke="#8f8dbb" stroke-width="1"/>
</svg>
<div class="b" style="left:1171px;top:994px;height:18px;font-size:12px;line-height:18px;color:#fff;letter-spacing:-0.3px">РУС</div>
<div class="b" style="left:1200px;top:986px;width:74px;height:18px;font-size:12px;line-height:18px;color:#fff;text-align:center;letter-spacing:-0.3px">21:09</div>
<div class="b" style="left:1200px;top:1002px;width:74px;height:18px;font-size:12px;line-height:18px;color:#fff;text-align:center;letter-spacing:-0.4px">06.10.2017</div>

</body></html>
